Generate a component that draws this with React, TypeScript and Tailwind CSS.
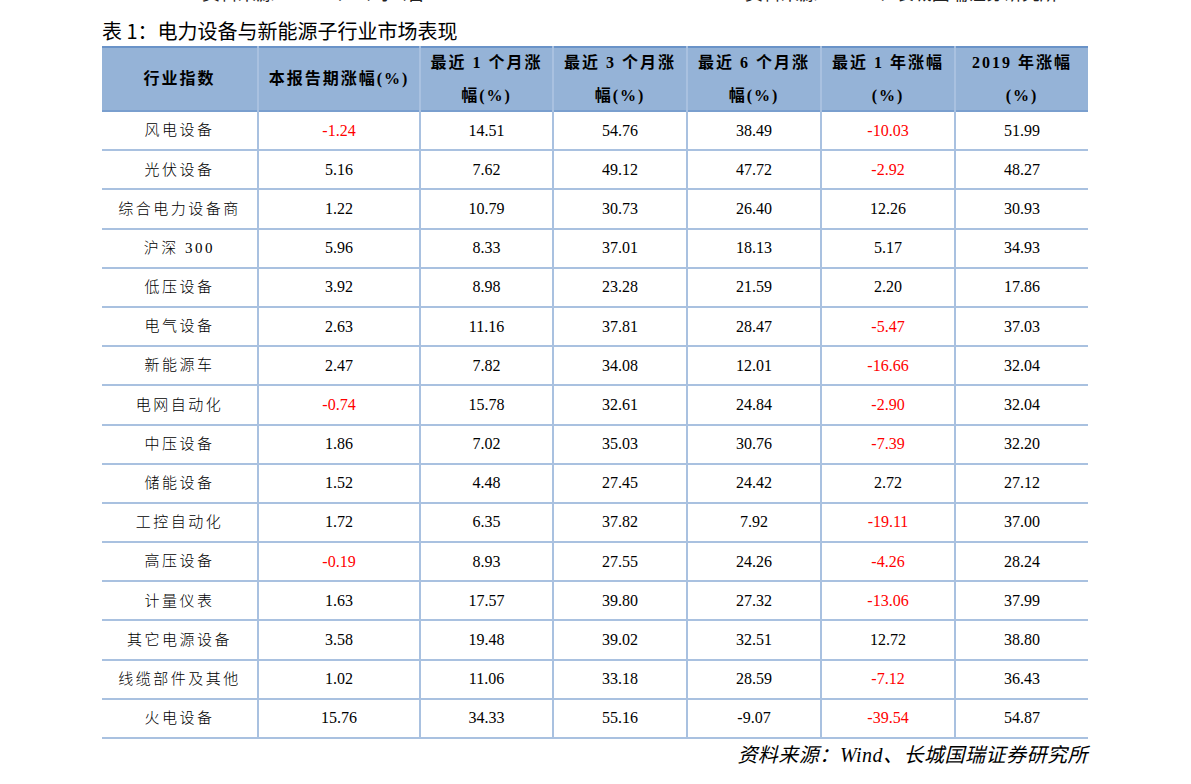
import React from "react";

type Row = { name: string; values: string[] };

const rows: Row[] = [
  { name: "风电设备", values: ["-1.24", "14.51", "54.76", "38.49", "-10.03", "51.99"] },
  { name: "光伏设备", values: ["5.16", "7.62", "49.12", "47.72", "-2.92", "48.27"] },
  { name: "综合电力设备商", values: ["1.22", "10.79", "30.73", "26.40", "12.26", "30.93"] },
  { name: "沪深 300", values: ["5.96", "8.33", "37.01", "18.13", "5.17", "34.93"] },
  { name: "低压设备", values: ["3.92", "8.98", "23.28", "21.59", "2.20", "17.86"] },
  { name: "电气设备", values: ["2.63", "11.16", "37.81", "28.47", "-5.47", "37.03"] },
  { name: "新能源车", values: ["2.47", "7.82", "34.08", "12.01", "-16.66", "32.04"] },
  { name: "电网自动化", values: ["-0.74", "15.78", "32.61", "24.84", "-2.90", "32.04"] },
  { name: "中压设备", values: ["1.86", "7.02", "35.03", "30.76", "-7.39", "32.20"] },
  { name: "储能设备", values: ["1.52", "4.48", "27.45", "24.42", "2.72", "27.12"] },
  { name: "工控自动化", values: ["1.72", "6.35", "37.82", "7.92", "-19.11", "37.00"] },
  { name: "高压设备", values: ["-0.19", "8.93", "27.55", "24.26", "-4.26", "28.24"] },
  { name: "计量仪表", values: ["1.63", "17.57", "39.80", "27.32", "-13.06", "37.99"] },
  { name: "其它电源设备", values: ["3.58", "19.48", "39.02", "32.51", "12.72", "38.80"] },
  { name: "线缆部件及其他", values: ["1.02", "11.06", "33.18", "28.59", "-7.12", "36.43"] },
  { name: "火电设备", values: ["15.76", "34.33", "55.16", "-9.07", "-39.54", "54.87"] },
];

// only the report-period and 1-year columns are coloured red
const redCols = [0, 4];

const headers: string[][] = [
  ["行业指数"],
  ["本报告期涨幅(%)"],
  ["最近 1 个月涨", "幅(%)"],
  ["最近 3 个月涨", "幅(%)"],
  ["最近 6 个月涨", "幅(%)"],
  ["最近 1 年涨幅", "(%)"],
  ["2019 年涨幅", "(%)"],
];

const widths = ["w-[156px]", "w-[162px]", "w-[133px]", "w-[134px]", "w-[134px]", "w-[134px]", "w-[133px]"];

export default function App() {
  return (
    <div className="w-[1191px] h-[784px] bg-white overflow-hidden font-['Liberation_Serif','Noto_Sans_CJK_SC',serif] text-black">
      <div className="h-[2px] overflow-hidden">
        <div className="flex -mt-[18px] text-[18px] leading-[20px] text-[#222] font-['Noto_Sans_CJK_SC',sans-serif]">
          <span className="ml-[202px]">资料来源：Wind、公司公告</span>
          <span className="ml-[320px]">资料来源：Wind、长城国瑞证券研究所</span>
        </div>
      </div>
      <div className="pl-[102px]">
        <div className="mt-[14px] h-[30px] leading-[30px] text-[20px] font-['Noto_Sans_CJK_SC',sans-serif]">
          表 1：电力设备与新能源子行业市场表现
        </div>
        <table className="border-collapse table-fixed w-[986px]">
          <colgroup>
            {widths.map((w, i) => (
              <col key={i} className={w} />
            ))}
          </colgroup>
          <thead>
            <tr className="h-[64px] bg-[#95b3d7] border-t-2 border-t-[#6a93c8] border-b-2 border-b-[#7a9fce]">
              {headers.map((lines, i) => (
                <th
                  key={i}
                  className={`p-0 align-middle text-center font-bold text-[16px] tracking-[2px] leading-[24px] font-['Liberation_Serif','Noto_Sans_CJK_SC',serif] ${
                    i > 0 ? "border-l-2 border-l-[#a9c1e0]" : ""
                  }`}
                >
                  <div className="flex flex-col gap-[9px]">
                    {lines.map((l, j) => (
                      <div key={j}>{l}</div>
                    ))}
                  </div>
                </th>
              ))}
            </tr>
          </thead>
          <tbody>
            {rows.map((r) => (
              <tr key={r.name} className="h-[39.2px] border-b-2 border-b-[#a9c1e0]">
                <td className="p-0 text-center text-[15px] tracking-[2.5px] font-light">{r.name}</td>
                {r.values.map((v, i) => (
                  <td
                    key={i}
                    className={`p-0 text-center text-[16px] border-l-2 border-l-[#a9c1e0] ${
                      redCols.includes(i) && v.startsWith("-") ? "text-[#ff0000]" : ""
                    }`}
                  >
                    {v}
                  </td>
                ))}
              </tr>
            ))}
          </tbody>
        </table>
        <div className="w-[986px] mt-[1px] text-right italic text-[20px] leading-[28px] tracking-[0.5px] font-['Noto_Sans_CJK_SC',sans-serif]">
          资料来源：<span className="font-['Liberation_Serif',serif]">Wind</span>、长城国瑞证券研究所
        </div>
      </div>
    </div>
  );
}
